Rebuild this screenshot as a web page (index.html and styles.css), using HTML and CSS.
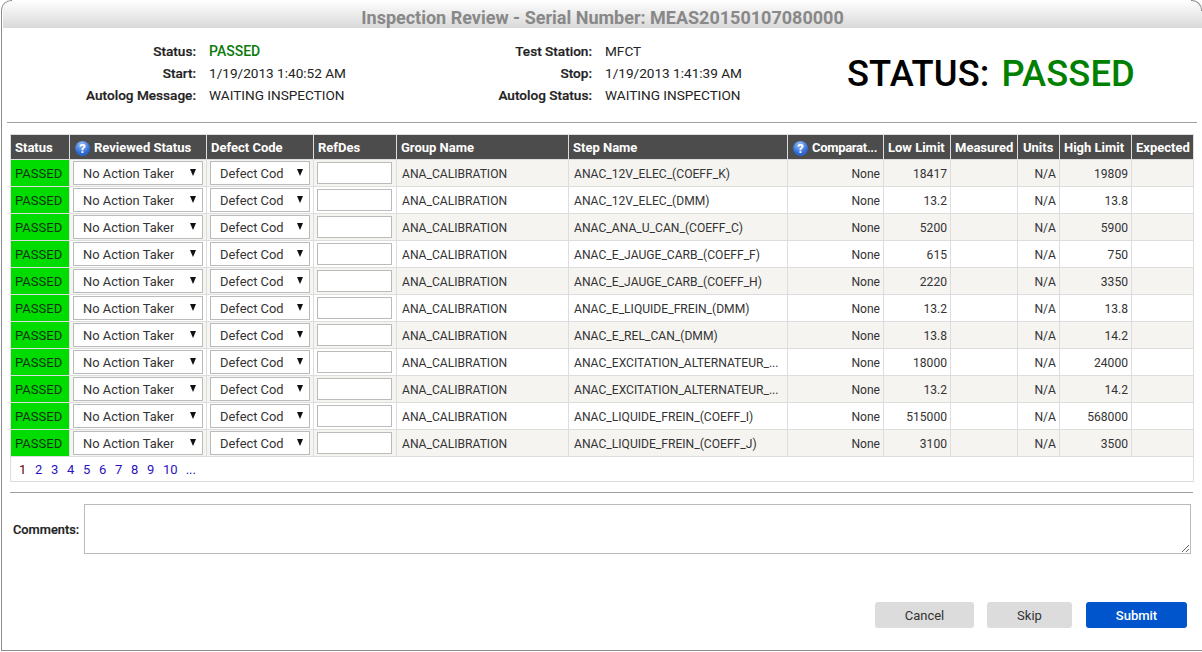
FILE: index.html
```html
<!DOCTYPE html>
<html lang="en">
<head>
<meta charset="utf-8">
<title>Inspection Review</title>
<link rel="stylesheet" href="styles.css">
</head>
<body>
<div class="window">
  <h1 class="title">Inspection Review - Serial Number: MEAS20150107080000</h1>
  <section class="summary">
    <dl class="info info-a">
      <dt>Status:</dt><dd class="ok">PASSED</dd>
      <dt>Start:</dt><dd>1/19/2013 1:40:52 AM</dd>
      <dt>Autolog Message:</dt><dd>WAITING INSPECTION</dd>
    </dl>
    <dl class="info info-b">
      <dt>Test Station:</dt><dd>MFCT</dd>
      <dt>Stop:</dt><dd>1/19/2013 1:41:39 AM</dd>
      <dt>Autolog Status:</dt><dd>WAITING INSPECTION</dd>
    </dl>
    <div class="big"><span>STATUS:</span> <span class="big-ok">PASSED</span></div>
  </section>
  <hr class="rule rule-top">
  <table class="grid">
    <colgroup>
      <col class="c1"><col class="c2"><col class="c3"><col class="c4"><col class="c5"><col class="c6"><col class="c7"><col class="c8"><col class="c9"><col class="c10"><col class="c11"><col class="c12">
    </colgroup>
    <thead>
      <tr>
        <th>Status</th>
        <th><span class="help">?</span>Reviewed Status</th>
        <th>Defect Code</th>
        <th>RefDes</th>
        <th>Group Name</th>
        <th>Step Name</th>
        <th class="clip"><span class="help">?</span>Comparat...</th>
        <th>Low Limit</th>
        <th>Measured</th>
        <th>Units</th>
        <th>High Limit</th>
        <th>Expected</th>
      </tr>
    </thead>
    <tbody>
      <tr class="odd"><td class="pass">PASSED</td><td><div class="pick"><select class="sel-a"><option>No Action Taken</option></select></div></td><td><div class="pick"><select class="sel-b"><option>Defect Code</option></select></div></td><td><input class="ref" type="text"></td><td>ANA_CALIBRATION</td><td>ANAC_12V_ELEC_(COEFF_K)</td><td class="r">None</td><td class="r">18417</td><td></td><td class="r">N/A</td><td class="r">19809</td><td></td></tr>
      <tr><td class="pass">PASSED</td><td><div class="pick"><select class="sel-a"><option>No Action Taken</option></select></div></td><td><div class="pick"><select class="sel-b"><option>Defect Code</option></select></div></td><td><input class="ref" type="text"></td><td>ANA_CALIBRATION</td><td>ANAC_12V_ELEC_(DMM)</td><td class="r">None</td><td class="r">13.2</td><td></td><td class="r">N/A</td><td class="r">13.8</td><td></td></tr>
      <tr class="odd"><td class="pass">PASSED</td><td><div class="pick"><select class="sel-a"><option>No Action Taken</option></select></div></td><td><div class="pick"><select class="sel-b"><option>Defect Code</option></select></div></td><td><input class="ref" type="text"></td><td>ANA_CALIBRATION</td><td>ANAC_ANA_U_CAN_(COEFF_C)</td><td class="r">None</td><td class="r">5200</td><td></td><td class="r">N/A</td><td class="r">5900</td><td></td></tr>
      <tr><td class="pass">PASSED</td><td><div class="pick"><select class="sel-a"><option>No Action Taken</option></select></div></td><td><div class="pick"><select class="sel-b"><option>Defect Code</option></select></div></td><td><input class="ref" type="text"></td><td>ANA_CALIBRATION</td><td>ANAC_E_JAUGE_CARB_(COEFF_F)</td><td class="r">None</td><td class="r">615</td><td></td><td class="r">N/A</td><td class="r">750</td><td></td></tr>
      <tr class="odd"><td class="pass">PASSED</td><td><div class="pick"><select class="sel-a"><option>No Action Taken</option></select></div></td><td><div class="pick"><select class="sel-b"><option>Defect Code</option></select></div></td><td><input class="ref" type="text"></td><td>ANA_CALIBRATION</td><td>ANAC_E_JAUGE_CARB_(COEFF_H)</td><td class="r">None</td><td class="r">2220</td><td></td><td class="r">N/A</td><td class="r">3350</td><td></td></tr>
      <tr><td class="pass">PASSED</td><td><div class="pick"><select class="sel-a"><option>No Action Taken</option></select></div></td><td><div class="pick"><select class="sel-b"><option>Defect Code</option></select></div></td><td><input class="ref" type="text"></td><td>ANA_CALIBRATION</td><td>ANAC_E_LIQUIDE_FREIN_(DMM)</td><td class="r">None</td><td class="r">13.2</td><td></td><td class="r">N/A</td><td class="r">13.8</td><td></td></tr>
      <tr class="odd"><td class="pass">PASSED</td><td><div class="pick"><select class="sel-a"><option>No Action Taken</option></select></div></td><td><div class="pick"><select class="sel-b"><option>Defect Code</option></select></div></td><td><input class="ref" type="text"></td><td>ANA_CALIBRATION</td><td>ANAC_E_REL_CAN_(DMM)</td><td class="r">None</td><td class="r">13.8</td><td></td><td class="r">N/A</td><td class="r">14.2</td><td></td></tr>
      <tr><td class="pass">PASSED</td><td><div class="pick"><select class="sel-a"><option>No Action Taken</option></select></div></td><td><div class="pick"><select class="sel-b"><option>Defect Code</option></select></div></td><td><input class="ref" type="text"></td><td>ANA_CALIBRATION</td><td class="clip">ANAC_EXCITATION_ALTERNATEUR_...</td><td class="r">None</td><td class="r">18000</td><td></td><td class="r">N/A</td><td class="r">24000</td><td></td></tr>
      <tr class="odd"><td class="pass">PASSED</td><td><div class="pick"><select class="sel-a"><option>No Action Taken</option></select></div></td><td><div class="pick"><select class="sel-b"><option>Defect Code</option></select></div></td><td><input class="ref" type="text"></td><td>ANA_CALIBRATION</td><td class="clip">ANAC_EXCITATION_ALTERNATEUR_...</td><td class="r">None</td><td class="r">13.2</td><td></td><td class="r">N/A</td><td class="r">14.2</td><td></td></tr>
      <tr><td class="pass">PASSED</td><td><div class="pick"><select class="sel-a"><option>No Action Taken</option></select></div></td><td><div class="pick"><select class="sel-b"><option>Defect Code</option></select></div></td><td><input class="ref" type="text"></td><td>ANA_CALIBRATION</td><td>ANAC_LIQUIDE_FREIN_(COEFF_I)</td><td class="r">None</td><td class="r">515000</td><td></td><td class="r">N/A</td><td class="r">568000</td><td></td></tr>
      <tr class="odd"><td class="pass">PASSED</td><td><div class="pick"><select class="sel-a"><option>No Action Taken</option></select></div></td><td><div class="pick"><select class="sel-b"><option>Defect Code</option></select></div></td><td><input class="ref" type="text"></td><td>ANA_CALIBRATION</td><td>ANAC_LIQUIDE_FREIN_(COEFF_J)</td><td class="r">None</td><td class="r">3100</td><td></td><td class="r">N/A</td><td class="r">3500</td><td></td></tr>
    </tbody>
    <tfoot>
      <tr><td colspan="12" class="pager"><span class="cur">1</span><a href="#">2</a><a href="#">3</a><a href="#">4</a><a href="#">5</a><a href="#">6</a><a href="#">7</a><a href="#">8</a><a href="#">9</a><a href="#">10</a><a href="#">...</a></td></tr>
    </tfoot>
  </table>
  <hr class="rule rule-bottom">
  <div class="comments">
    <label class="comments-label" for="cmt">Comments:</label>
    <textarea id="cmt" class="comments-box"></textarea>
  </div>
  <div class="actions">
    <button class="btn btn-cancel" type="button">Cancel</button>
    <button class="btn btn-skip" type="button">Skip</button>
    <button class="btn btn-submit" type="button">Submit</button>
  </div>
</div>
</body>
</html>
```
FILE: styles.css
```css
* { box-sizing: border-box; }
html, body { margin: 0; height: 652px; overflow: hidden; background: #fff; }
body { font-family: Roboto, "Liberation Sans", sans-serif; font-size: 13px; color: #222; }
.window {
  position: relative;
  width: 1201px; height: 651px;
  margin: 0 0 0 1px; padding: 0 0 0 1px;
  border-left: 1px solid #8c8c8c; border-bottom: 1px solid #8c8c8c;
  border-top-left-radius: 10px;
  overflow: hidden;
  background: #fff;
}
.window::before, .window::after {
  content: ""; position: absolute; top: 0; width: 10px; height: 10px; z-index: 1;
}
.window::before { left: -1px; border-top: 1px solid #8c8c8c; border-left: 1px solid #8c8c8c; border-top-left-radius: 10px; }
.window::after { right: 0; border-top: 1px solid #8c8c8c; border-right: 1px solid #8c8c8c; border-top-right-radius: 10px; }
.title {
  margin: 0; height: 28px; line-height: 36px;
  font-size: 18px; font-weight: 700; color: #888; text-align: center;
  background: linear-gradient(#fff, #d9d9d9);
}
.summary { display: flex; height: 94px; }
.info { display: grid; margin: 0; align-content: start; padding-top: 12px; grid-auto-rows: 22px; column-gap: 13px; font-size: 13.6px; line-height: 22px; }
.info dt { text-align: right; color: #222; font-weight: 500; -webkit-text-stroke: 0.2px #222; }
.info dd { margin: 0; color: #222; }
.info-a { grid-template-columns: 193px 258px; }
.info-b { grid-template-columns: 125px 242px; }
.info dd.ok { color: #0a7a0a; font-weight: 500; font-size: 14px; }
.big { font-size: 36.3px; font-weight: 500; color: #000; line-height: 44px; padding-top: 24px; white-space: nowrap; letter-spacing: 0.1px; }
.big-ok { color: #008000; margin-left: 3px; }
.rule { border: 0; height: 1px; margin: 0; background: #a0a0a0; }
.rule-top { width: 1190px; margin-left: 4px; }
.grid {
  border-collapse: collapse; table-layout: fixed; width: 1183px;
  margin: 11px 0 0 7px; font-size: 12.1px;
}
.c1 { width: 59px; } .c2 { width: 137px; } .c3 { width: 107px; } .c4 { width: 83px; }
.c5 { width: 172px; } .c6 { width: 219px; } .c7 { width: 96px; } .c8 { width: 67px; }
.c9 { width: 67px; } .c10 { width: 42px; } .c11 { width: 72px; } .c12 { width: 62px; }
.grid th {
  height: 25px; background: #4c4c4c; color: #fff; font-size: 13px; font-weight: 700;
  text-align: left; padding: 1px 0 0 4px; border: 1px solid #ddd; white-space: nowrap; overflow: hidden;
  border-bottom: 0;
}
.grid th:nth-child(10) { padding-left: 5px; }
.grid th.clip { letter-spacing: -0.3px; }
.grid td { height: 27px; padding: 1px 3px 0 5px; border: 1px solid #ddd; white-space: nowrap; overflow: hidden; color: #333; }
.grid tr.odd td { background: #f5f4f1; }
.grid td.pass, .grid tr.odd td.pass { background: #00dc00; color: #113311; padding: 0 0 0 4px; font-size: 13px; }
.grid td:nth-child(2), .grid td:nth-child(3) { padding: 0 3px; }
.grid td:nth-child(4) { padding: 0 3px; }
.grid td.r { text-align: right; }
.help {
  display: inline-block; width: 15px; height: 15px; border-radius: 50%;
  background: radial-gradient(circle at 45% 25%, #9cc0f6, #2f6bd8 60%, #1f55b8);
  color: #fff; font-size: 13px; font-weight: 700; line-height: 15px; text-align: center;
  margin: -2px 4px -2px 1px; vertical-align: -1px; letter-spacing: 0;
}
.pick { position: relative; height: 24px; }
.pick::after {
  content: ""; position: absolute; right: 7px; top: 8px;
  border-left: 3.5px solid transparent; border-right: 3.5px solid transparent; border-top: 7px solid #111;
  pointer-events: none;
}
.pick select {
  display: block; width: 100%; height: 24px; border: 1px solid #bbb; background: #fff;
  appearance: none; -webkit-appearance: none; border-radius: 0; outline: 0;
  font: 12.9px Roboto, sans-serif; color: #333; padding: 0 26px 0 9px;
}
.pick select.sel-a { padding-right: 28px; }
.ref { display: block; width: 75px; height: 22px; border: 1px solid #bbb; background: #fff; padding: 0; margin: 0; }
.grid td.pager { height: 25px; background: #fff; padding: 0 0 0 4px; font-size: 13px; border-top: 1px solid #ddd; }
.pager .cur, .pager a { display: inline-block; padding: 0 4px; margin-right: 0; }
.pager .cur { color: #600; width: 16px; }
.pager a { color: #2a12c0; text-decoration: none; min-width: 16px; }
.rule-bottom { width: 1183px; margin: 10px 0 0 7px; }
.comments { display: flex; align-items: center; margin-top: 11px; padding-left: 10px; gap: 5px; }
.comments-label { font-weight: 500; font-size: 12.8px; color: #222; -webkit-text-stroke: 0.2px #222; width: 66px; white-space: nowrap; }
.comments-box { width: 1107px; height: 50px; border: 1px solid #bbb; background: #fff; margin: 0; padding: 0; outline: 0; }
.actions { display: flex; justify-content: flex-end; gap: 13px; margin-top: 48px; padding-right: 15px; }
.btn { height: 26px; border: 0; border-radius: 3px; font: 13px Roboto, sans-serif; padding: 0; color: #333; background: #dcdcdc; }
.btn-cancel { width: 99px; }
.btn-skip { width: 85px; }
.btn-submit { width: 101px; margin-left: 1px; background: #0055cc; color: #fff; font-weight: 500; }
```
